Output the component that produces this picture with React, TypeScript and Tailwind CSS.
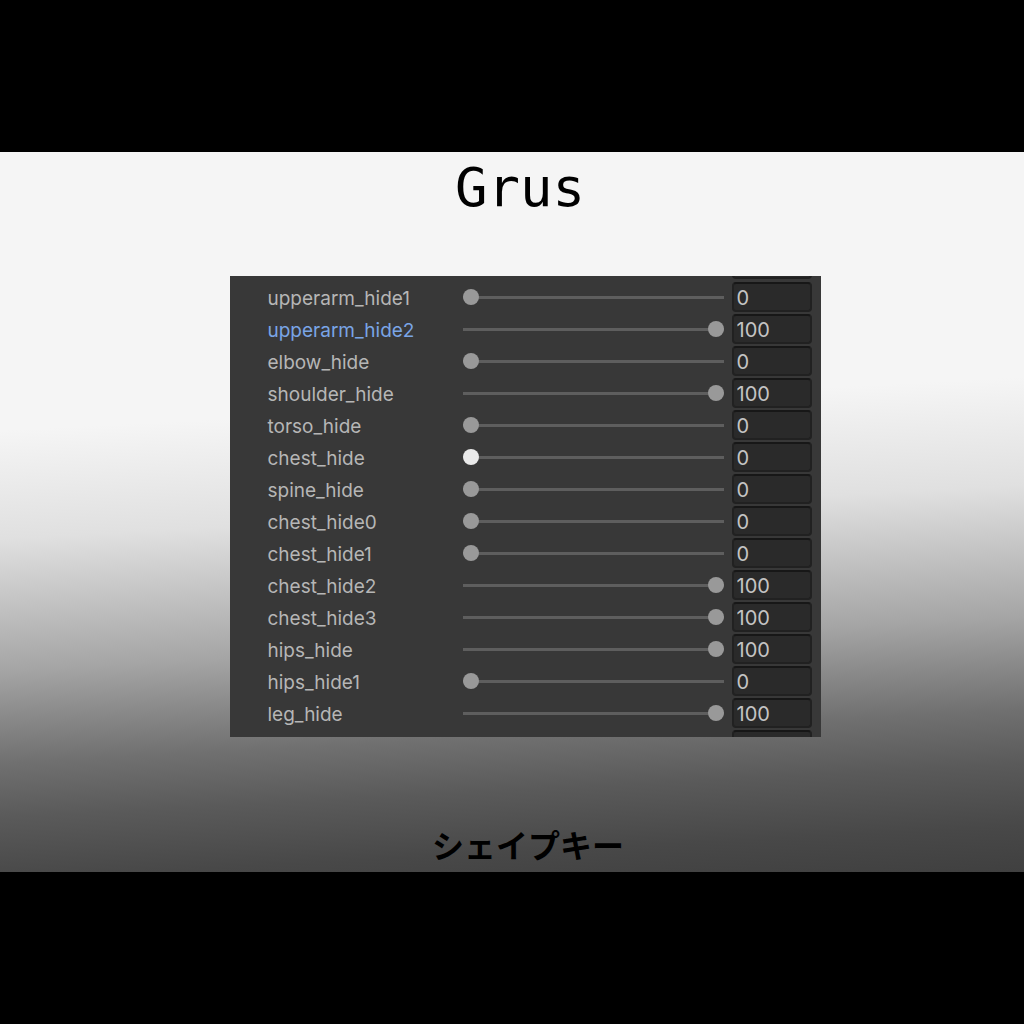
import { useState } from 'react';
import clsx from 'clsx';

const SHAPE_KEYS = [
    { name: 'upperarm_hide1', value: 0 },
    { name: 'upperarm_hide2', value: 100, selected: true },
    { name: 'elbow_hide', value: 0 },
    { name: 'shoulder_hide', value: 100 },
    { name: 'torso_hide', value: 0 },
    { name: 'chest_hide', value: 0, active: true },
    { name: 'spine_hide', value: 0 },
    { name: 'chest_hide0', value: 0 },
    { name: 'chest_hide1', value: 0 },
    { name: 'chest_hide2', value: 100 },
    { name: 'chest_hide3', value: 100 },
    { name: 'hips_hide', value: 100 },
    { name: 'hips_hide1', value: 0 },
    { name: 'leg_hide', value: 100 },
];

const fieldClass = 'h-[30px] w-20 shrink-0 rounded-[4px] border-2 border-[#212121] border-t-[#171717] bg-[#2a2a2a]';

const ShapeKeyRow = ({ shapeKey }: { shapeKey: any }) => {
    const [value, setValue] = useState<number>(shapeKey.value);

    return (
        <div className="flex h-8 items-center">
            <label
                htmlFor={shapeKey.name}
                className={clsx('w-[195px] shrink-0 pt-1 text-[19px] leading-[28px]', shapeKey.selected ? 'text-[#7aa5e6]' : 'text-[#b6b6b6]')}
            >
                {shapeKey.name}
            </label>
            <input
                id={shapeKey.name}
                type="range"
                min={0}
                max={100}
                value={value}
                onChange={(e) => setValue(Number(e.target.value))}
                className={clsx(
                    'h-4 min-w-0 flex-1 appearance-none bg-transparent outline-none',
                    '[&::-webkit-slider-runnable-track]:h-[3px] [&::-webkit-slider-runnable-track]:bg-[#5e5e5e]',
                    '[&::-webkit-slider-thumb]:-mt-[7px] [&::-webkit-slider-thumb]:size-4 [&::-webkit-slider-thumb]:appearance-none [&::-webkit-slider-thumb]:rounded-full',
                    shapeKey.active ? '[&::-webkit-slider-thumb]:bg-[#eaeaea]' : '[&::-webkit-slider-thumb]:bg-[#999999]'
                )}
            />
            <input
                type="text"
                aria-label={`${shapeKey.name} value`}
                value={value}
                onChange={(e) => setValue(Number(e.target.value) || 0)}
                className={clsx(fieldClass, 'ml-2 px-[3px] pt-[2px] text-[20px] text-[#c4c4c4] outline-none')}
            />
        </div>
    );
};

const App = () => {
    return (
        <div className="flex min-h-screen flex-col justify-center bg-black font-['Inter',sans-serif]">
            <main className="flex min-h-[720px] flex-col items-center bg-[linear-gradient(177deg,#f5f5f5_36%,#e0e0e0_50%,#c8c8c8_57%,#a5a5a5_67%,#8a8a8a_73%,#707070_79%,#5a5a5a_86%,#484848_94%,#404040_100%)]">
                <h1 className="pt-1 pl-4 font-['DejaVu_Sans_Mono',monospace] text-[54px] leading-[64px] text-black">Grus</h1>

                <div className="mt-14 w-full pl-[26px]">
                    <section className="mx-auto w-full max-w-[591px] overflow-hidden bg-[#383838] pr-[9px] pl-[38px]">
                        {/* bottom edge of the field scrolled off above */}
                        <div className="flex h-[5px] items-end justify-end overflow-hidden pb-[2px]">
                            <div className={fieldClass} />
                        </div>
                        {SHAPE_KEYS.map((shapeKey) => (
                            <ShapeKeyRow key={shapeKey.name} shapeKey={shapeKey} />
                        ))}
                        <div className="flex h-2 items-start justify-end overflow-hidden pt-[1px]">
                            <div className={fieldClass} />
                        </div>
                    </section>
                </div>

                <p className="mt-auto pb-1 pl-8 font-['Noto_Sans_CJK_JP',sans-serif] text-[32px] leading-[48px] font-bold text-black">シェイプキー</p>
            </main>
        </div>
    );
};

export default App;
